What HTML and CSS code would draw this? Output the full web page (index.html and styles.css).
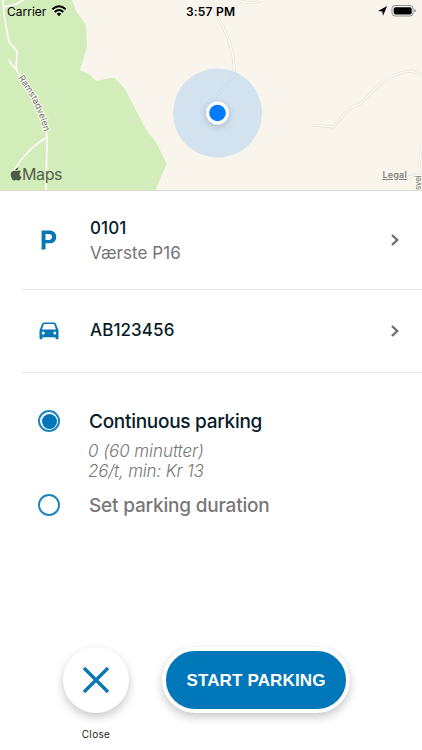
FILE: index.html
```html
<!DOCTYPE html>
<html lang="en">
<head>
<meta charset="utf-8">
<title>Parking</title>
<link rel="stylesheet" href="styles.css">
</head>
<body>
<main class="screen">
  <section class="map">
    <svg class="map-art" viewBox="0 0 422 191" width="422" height="191">
      <path class="woods" d="M0 0H72L76 11L86 25L87 47L80 70L90 75L96 81L114 77.500L125 89L145 128L157 144L166.500 164L155 191H0Z"/>
      <g class="path-white">
        <path d="M3 0L4 15L9 42L17 51L16 69L26 87Q46 112 47 139L46 191"/>
        <path d="M4 7L16 4L24 0"/>
        <path d="M9 59L11 64L16 69"/>
        <path d="M46 138C35 144 23 156 17 166L12 172"/>
      </g>
      <g id="roads">
        <g class="road-edge">
          <path d="M211 0L216 14Q236 47 234 75Q226 87 209 103Q202 111 204 124"/>
          <path d="M237 0Q250 5 262 0"/>
          <path d="M312 125L333 127L349 109L361 103L385 80Q397 72 412 71L422 75"/>
          <path d="M422 146Q417 170 420 191M406 178L415 175L422 176"/>
        </g>
        <g class="road-fill">
          <path d="M211 0L216 14Q236 47 234 75Q226 87 209 103Q202 111 204 124"/>
          <path d="M237 0Q250 5 262 0"/>
          <path d="M312 125L333 127L349 109L361 103L385 80Q397 72 412 71L422 75"/>
          <path d="M422 146Q417 170 420 191M406 178L415 175L422 176"/>
        </g>
      </g>
      <circle class="accuracy" cx="217.500" cy="113" r="44.500"/>
      <circle class="pin-shadow" cx="217.500" cy="115" r="12"/>
      <circle cx="217.500" cy="113" r="11.500" fill="#fff"/>
      <circle cx="217.500" cy="113" r="8.300" fill="#007aff"/>
      <path id="street" d="M18 78Q38 104 44.500 134" fill="none"/>
      <text class="street-name"><textPath href="#street" textLength="60">Ramstadveien</textPath></text>
      <text class="street-name side" transform="translate(421 190) rotate(-90)">svei</text>
      <path class="apple" d="M18.300 167.500c.1 1.600-1.300 3-2.900 2.900 0-1.600 1.300-2.800 2.900-2.900ZM21 171.800c-2.200 1.300-1.700 4.300.5 5.100-.7 1.900-1.900 3.700-3.100 3.700-.9 0-1.200-.5-2.200-.5s-1.300.5-2.200.5c-1.900 0-5.400-7.900-1.300-9.700 1.600-.7 2.500.2 3.500.2s2-.9 3.200-.5c.7.200 1.200.5 1.600 1.200Z"/>
    </svg>
    <div class="status">
      <span class="carrier">Carrier</span>
      <svg class="wifi" viewBox="0 0 16 12" width="16" height="12"><path d="M1.300 4.200Q8-1.800 14.700 4.200M3.700 6.900Q8 3.200 12.300 6.900" fill="none" stroke="#000" stroke-width="2"/><path d="M5.700 8.700Q8 6.800 10.300 8.700L8 11.200Z"/></svg>
      <span class="clock">3:57 PM</span>
      <svg class="device" viewBox="0 0 40 14" width="40" height="14"><path d="M10.200 2L6 11.800 5.300 7.600 1 7Z"/><rect x="15" y="1.500" width="21" height="10.500" rx="3" fill="#fff" fill-opacity=".5" stroke="#908e87"/><rect x="16.700" y="3.200" width="18" height="7.200" rx="1.700"/><path d="M37.500 5v3.500q1.300-.5 1.300-1.700T37.500 5Z" fill="#77756f"/></svg>
    </div>
    <div class="credits"><span class="maps">Maps</span><span class="legal">Legal</span></div>
  </section>
  <section class="rows">
    <div class="row zone">
      <span class="icon"><svg viewBox="0 0 20 20" width="20" height="20"><path fill="#0477b5" fill-rule="evenodd" d="M2.600 .5H10.200C14.600 .5 17.200 3 17.200 6.900S14.600 13.300 10.400 13.300H6.500V19.500H2.600ZM6.500 4V9.900H10C12 9.900 13.100 8.800 13.100 7S12 4 10 4Z"/></svg></span>
      <div class="details"><div class="code">0101</div><div class="place">Værste P16</div></div>
      <svg class="chevron" viewBox="0 0 10 14" width="10" height="14"><path d="M2 2L7.200 7 2 12"/></svg>
    </div>
    <div class="row vehicle">
      <span class="icon"><svg viewBox="0 0 20 18" width="20" height="18"><path fill="#0477b5" fill-rule="evenodd" d="M5 .5H15Q16.500.5 17 2L19.500 8.500V16.200Q19.500 17.200 18.500 17.200H17.500Q16.500 17.200 16.500 16.200V15.200H3.500V16.200Q3.500 17.200 2.500 17.200H1.500Q.5 17.200.5 16.200V8.500L3 2Q3.500.5 5 .5ZM4.900 2L3 7.500H17L15.100 2ZM4.200 9.500A1.500 1.500 0 1 0 4.200 12.500 1.500 1.500 0 1 0 4.200 9.500ZM15.800 9.500A1.500 1.500 0 1 0 15.800 12.500 1.500 1.500 0 1 0 15.800 9.500Z"/></svg></span>
      <div class="details"><div class="code plate">AB123456</div></div>
      <svg class="chevron" viewBox="0 0 10 14" width="10" height="14"><path d="M2 2L7.200 7 2 12"/></svg>
    </div>
  </section>
  <section class="options">
    <div class="option"><span class="radio selected"></span><span class="label active">Continuous parking</span></div>
    <div class="price"><div class="minutes">0 (60 minutter)</div><div class="rate">26/t, min: Kr 13</div></div>
    <div class="option"><span class="radio"></span><span class="label duration">Set parking duration</span></div>
  </section>
  <footer class="actions">
    <div class="close">
      <button class="close-button" aria-label="Close"><svg viewBox="0 0 28 28" width="28" height="28"><path d="M2 2L26 26M26 2L2 26" stroke="#0878b3" stroke-width="3.300"/></svg></button>
      <span class="close-label">Close</span>
    </div>
    <button class="start"><span>START PARKING</span></button>
  </footer>
</main>
</body>
</html>
```
FILE: styles.css
```css
* { box-sizing: border-box; }
body { margin: 0; background: #fff; font-family: Inter, "Liberation Sans", sans-serif; }
button { padding: 0; font-family: inherit; }
svg { display: block; flex: none; }
.screen { width: 422px; height: 750px; display: flex; flex-direction: column; overflow: hidden; }
.map { height: 191px; display: grid; background: #f9f4ec; border-bottom: 1px solid #dedbd5; overflow: hidden; }
.map > * { grid-area: 1 / 1; }
.woods { fill: #d2ecba; }
.path-white { fill: none; stroke: #fff; stroke-width: 1.6; }
.road-edge { fill: none; stroke: #e2ddd6; stroke-width: 2.7; }
.road-fill { fill: none; stroke: #fdfaf5; stroke-width: 1.6; }
.accuracy { fill: #a6cdf3; fill-opacity: .46; }
.pin-shadow { fill: #456; opacity: .25; filter: blur(3px); }
.street-name { font-size: 9px; fill: #74746c; stroke: #f8faf1; stroke-width: 2px; paint-order: stroke; }
.side { font-size: 8px; letter-spacing: -.2px; }
.apple { fill: #4d5c48; }
.status { align-self: start; height: 22px; display: grid; grid-template-columns: 44px 16px 1fr 40px; align-items: center; padding: 0 5px 0 7px; color: #000; }
.carrier { font-size: 12px; letter-spacing: 0; }
.wifi { margin-top: -1px; }
.clock { font-size: 12px; font-weight: 600; letter-spacing: .2px; padding-left: 119px; white-space: nowrap; }
.device { margin-top: -1px; }
.credits { align-self: end; display: flex; justify-content: space-between; align-items: center; height: 34px; padding: 0 15px 0 22px; }
.maps { font-size: 16px; letter-spacing: -.4px; color: #556150; }
.legal { font-size: 9px; font-weight: 600; letter-spacing: .2px; color: #85827d; text-decoration: underline; margin-top: 1px; }
.row { margin-left: 21px; display: flex; align-items: center; border-bottom: 1px solid #e8e8e8; padding-right: 22px; }
.zone { height: 99px; }
.vehicle { height: 83px; }
.icon { width: 56px; display: flex; justify-content: center; }
.details { flex: 1; padding-left: 13px; }
.code { font-size: 17px; line-height: 25px; font-weight: 450; color: #071b28; letter-spacing: .08px; }
.plate { margin-top: -2px; }
.place { font-size: 17px; line-height: 24px; color: #747474; letter-spacing: .05px; }
.chevron path { fill: none; stroke: #707070; stroke-width: 2.4; }
.options { padding: 36px 0 0 38px; }
.option { display: flex; align-items: center; height: 24px; }
.radio { width: 22px; height: 22px; border: 2px solid #1e84bd; border-radius: 50%; display: grid; place-items: center; }
.selected::after { content: ""; width: 15px; height: 15px; border-radius: 50%; background: #0077b8; }
.label { margin-left: 29px; font-size: 19px; letter-spacing: -.19px; color: #777; font-weight: 450; white-space: nowrap; }
.active { color: #071b28; font-weight: 480; letter-spacing: -.28px; }
.price { padding: 8px 0 12px 50px; height: 60px; color: #777; font-size: 17px; line-height: 20px; font-style: italic; font-weight: 300; letter-spacing: -.06px; white-space: nowrap; }
.rate { letter-spacing: -.18px; }
.actions { margin-top: auto; height: 103px; padding-left: 63px; display: flex; align-items: flex-start; gap: 33px; }
.close { width: 66px; display: flex; flex-direction: column; align-items: center; }
.close-button { width: 66px; height: 66px; border: 0; border-radius: 50%; background: #fff; display: grid; place-items: center; box-shadow: 0 4px 10px rgb(0 0 0 / 22%); }
.close-label { margin-top: 14px; font-size: 10px; line-height: 14px; letter-spacing: .35px; color: #222; }
.start { width: 188px; height: 66px; border: 4px solid #fff; border-radius: 33px; background: #0077b8; color: #fff; font-family: "Liberation Sans", sans-serif; font-weight: 700; font-size: 17px; letter-spacing: .15px; padding-top: 2px; white-space: nowrap; box-shadow: 0 4px 10px rgb(0 0 0 / 22%); }
```
